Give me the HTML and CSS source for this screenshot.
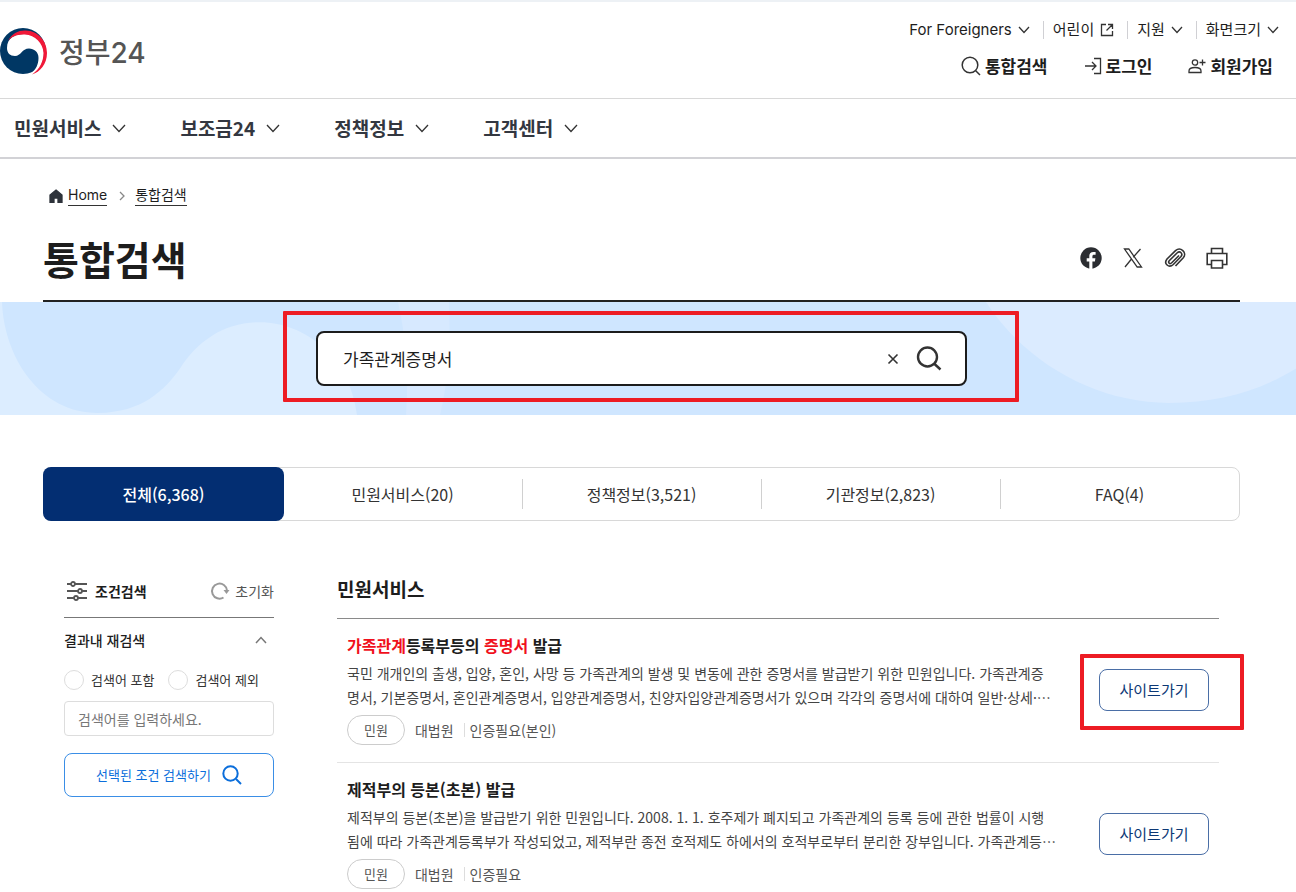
FILE: index.html
```html
<!DOCTYPE html>
<html lang="ko">
<head>
<meta charset="utf-8">
<meta name="viewport" content="width=device-width, initial-scale=1">
<title>통합검색 | 정부24</title>
<link rel="stylesheet" href="styles.css">
</head>
<body>
<header class="header">
  <a class="logo" href="#">
    <svg class="logo-mark" viewBox="0 0 48 48" aria-hidden="true">
      <circle cx="23" cy="24" r="23" fill="#003764"/>
      <path d="M7 21C7 11 15 7 24 7C36 7 44 15 44 26C44 36 39 43 33 48L31 46C36 43 38.500 37 38.500 31C38.500 25 34 21.500 29 21.500C22 21.500 21 29 15 29C10 29 7 26 7 21Z" fill="#fff"/>
      <path d="M8 14C12 6 19 3 26 3.500C38 4 47 14 47 26C47 37 40 45 32 47.500C40 42 43.500 34 43.500 26C43 16 35 8 25 7.500C17 7 11 10 8 14Z" fill="#f01838"/>
    </svg>
    <span>정부24</span>
  </a>
  <div class="header-menus">
    <nav class="util" aria-label="부가 메뉴">
      <button type="button">For Foreigners <svg class="chev" viewBox="0 0 12 8"><path d="M1 1l5 5.500L11 1"/></svg></button>
      <a href="#">어린이 <svg class="ext" viewBox="0 0 14 14"><path d="M6 1.500H1.500v11h11V8M8 1.500h4.500V6M12.500 1.500L6.500 7.500"/></svg></a>
      <button type="button">지원 <svg class="chev" viewBox="0 0 12 8"><path d="M1 1l5 5.500L11 1"/></svg></button>
      <button type="button">화면크기 <svg class="chev" viewBox="0 0 12 8"><path d="M1 1l5 5.500L11 1"/></svg></button>
    </nav>
    <nav class="account" aria-label="회원 메뉴">
      <a href="#"><svg class="i20" viewBox="0 0 20 20"><circle cx="9" cy="9" r="7.800"/><path d="M14.500 14.500l4.500 4.500"/></svg>통합검색</a>
      <a href="#"><svg class="i18" viewBox="0 0 18 18"><path d="M1 9h11M8 5l4 4-4 4M10 1.500h6.500v15H10"/></svg>로그인</a>
      <a href="#"><svg class="i18" viewBox="0 0 18 18"><circle cx="7" cy="5.500" r="2.700"/><path d="M1 15.500v-1.500c0-2.500 2-3.500 6-3.500s6 1 6 3.500v1.500zM11.500 5.500h6M14.500 2.500v6"/></svg>회원가입</a>
    </nav>
  </div>
</header>

<nav class="gnb" aria-label="주 메뉴">
  <button type="button">민원서비스 <svg viewBox="0 0 14 9"><path d="M1 1l6 6.500L13 1"/></svg></button>
  <button type="button">보조금24 <svg viewBox="0 0 14 9"><path d="M1 1l6 6.500L13 1"/></svg></button>
  <button type="button">정책정보 <svg viewBox="0 0 14 9"><path d="M1 1l6 6.500L13 1"/></svg></button>
  <button type="button">고객센터 <svg viewBox="0 0 14 9"><path d="M1 1l6 6.500L13 1"/></svg></button>
</nav>

<main>
  <div class="wrap">
    <nav class="crumbs" aria-label="현재 위치">
      <svg class="home" viewBox="0 0 14 14"><path d="M7 1l6 5v7.500H9V9H5v4.500H1V6z"/></svg>
      <a href="#">Home</a>
      <svg class="sep" viewBox="0 0 6 10"><path d="M1 1l4 4-4 4"/></svg>
      <a href="#">통합검색</a>
    </nav>
    <div class="title-row">
      <h1>통합검색</h1>
      <div class="share">
        <button type="button" aria-label="페이스북"><svg viewBox="0 0 22 22"><circle cx="11" cy="11" r="10.700" fill="#2b2d31"/><path d="M9.300 22v-7.500H6.700v-3.200h2.600V9c0-2.700 1.600-4.100 4-4.100.9 0 1.800.1 2.300.2v2.700h-1.500c-1.300 0-1.700.8-1.700 1.700v1.800h3l-.5 3.200h-2.500V22z" fill="#fff"/></svg></button>
        <button type="button" aria-label="X"><svg class="line" viewBox="0 0 22 22"><path d="M2.500 2h4.300l12.700 18h-4.300zM18.500 2l-7.300 8.200M9.500 12L3 20" /></svg></button>
        <button type="button" aria-label="링크 복사"><svg class="line clip" viewBox="0 0 22 22"><path d="M15 8.500l-7.500 7.500c-1.800 1.500-3.800-.5-2.300-2.200L13 6c3-2.700 6.500.7 3.800 3.800l-7.500 7.700c-4.500 4-10-.8-6.300-5.500l8.500-8.300c5-4.500 12 2 7.800 7L11.500 19"/></svg></button>
        <button type="button" aria-label="인쇄"><svg class="line print" viewBox="0 0 22 22"><path d="M5.500 6.500V1.500h11v5M5.500 17.500H1.200v-11h19.600v11h-4.300M5.500 13.500h11v7.500h-11z"/></svg></button>
      </div>
    </div>
  </div>

  <section class="banner">
    <svg class="waves" viewBox="0 0 1296 112" preserveAspectRatio="none" aria-hidden="true">
      <path fill="#dcedff" d="M0 0H2C4 55 40 110 98 110C142 110 165 87 180 66C198 38 225 20 260 20C305 20 350 55 357 112H0Z"/>
      <path fill="#d7e9ff" d="M398 0H449C451 40 448 80 440 112H406C409 75 406 35 398 0Z"/>
      <path fill="#dbebff" d="M986 0C1025 60 1095 100 1169 100C1218 100 1260 88 1296 66V0Z"/>
    </svg>
    <form class="search marked">
      <input type="text" aria-label="검색어" value="가족관계증명서">
      <button type="reset" aria-label="지우기"><svg class="x" viewBox="0 0 12 12"><path d="M1.500 1.500l9 9M10.500 1.500l-9 9"/></svg></button>
      <button type="submit" aria-label="검색"><svg class="glass" viewBox="0 0 26 26"><circle cx="11.500" cy="11" r="9.500"/><path d="M18 17.500l6.500 6"/></svg></button>
    </form>
  </section>

  <div class="wrap">
    <nav class="tabs" aria-label="검색 분류">
      <a class="on" href="#">전체(6,368)</a>
      <a href="#">민원서비스(20)</a>
      <a href="#">정책정보(3,521)</a>
      <a href="#">기관정보(2,823)</a>
      <a href="#">FAQ(4)</a>
    </nav>
    <div class="columns">
      <aside>
        <div class="filter-head">
          <svg class="sliders" viewBox="0 0 20 20"><path d="M0 3h4M8 3h12M0 10h11M15 10h5M0 17h7M11 17h9"/><circle cx="6" cy="3" r="2"/><circle cx="13" cy="10" r="2"/><circle cx="9" cy="17" r="2"/></svg>
          <h2>조건검색</h2>
          <button type="reset" form="refine"><svg class="reset" viewBox="0 0 18 18"><path d="M12.500 15.500A7.500 7.500 0 1 1 16 8.500"/><path class="tip" d="M12.500 8h6l-3 4z"/></svg>초기화</button>
        </div>
        <form id="refine">
          <button class="fold" type="button">결과내 재검색 <svg viewBox="0 0 12 8"><path d="M1 7l5-5.500L11 7"/></svg></button>
          <div class="radios">
            <label><input type="radio" name="mode">검색어 포함</label>
            <label><input type="radio" name="mode">검색어 제외</label>
          </div>
          <input class="term" type="text" aria-label="재검색어" placeholder="검색어를 입력하세요.">
          <button class="apply" type="submit">선택된 조건 검색하기 <svg viewBox="0 0 20 20"><circle cx="8.500" cy="8.500" r="7.200"/><path d="M14 14l5 5"/></svg></button>
        </form>
      </aside>
      <section class="results">
        <h2>민원서비스</h2>
        <article>
          <div class="body">
            <h3><a href="#"><mark>가족관계</mark>등록부등의 <mark>증명서</mark> 발급</a></h3>
            <p>국민 개개인의 출생, 입양, 혼인, 사망 등 가족관계의 발생 및 변동에 관한 증명서를 발급받기 위한 민원입니다. 가족관계증<br>명서, 기본증명서, 혼인관계증명서, 입양관계증명서, 친양자입양관계증명서가 있으며 각각의 증명서에 대하여 일반·상세·…</p>
            <div class="meta"><span class="badge">민원</span><span>대법원</span><span>인증필요(본인)</span></div>
          </div>
          <div class="go-box marked"><a class="go" href="#">사이트가기</a></div>
        </article>
        <article>
          <div class="body">
            <h3><a href="#">제적부의 등본(초본) 발급</a></h3>
            <p>제적부의 등본(초본)을 발급받기 위한 민원입니다. 2008. 1. 1. 호주제가 폐지되고 가족관계의 등록 등에 관한 법률이 시행<br>됨에 따라 가족관계등록부가 작성되었고, 제적부란 종전 호적제도 하에서의 호적부로부터 분리한 장부입니다. 가족관계등…</p>
            <div class="meta"><span class="badge">민원</span><span>대법원</span><span>인증필요</span></div>
          </div>
          <div class="go-box"><a class="go" href="#">사이트가기</a></div>
        </article>
      </section>
    </div>
  </div>
</main>
</body>
</html>
```
FILE: styles.css
```css
* { box-sizing: border-box; }

body {
  margin: 0;
  border-top: 2px solid #edf1f5;
  background: #fff;
  color: #1d1d1d;
  font-family: "Noto Sans CJK KR", sans-serif;
  font-size: 14px;
  line-height: 20px;
}

h1, h2, h3, p { margin: 0; }
a { color: inherit; text-decoration: none; }
svg { display: block; flex: none; fill: none; stroke: #333; stroke-width: 1.3; }
button { padding: 0; border: 0; background: none; color: inherit; font: inherit; cursor: pointer; }
input { font: inherit; color: inherit; }

.header {
  display: flex;
  justify-content: space-between;
  height: 97px;
  padding: 17px 17px 0 0;
  border-bottom: 1px solid #d8d8d8;
}
.logo {
  display: flex;
  align-items: center;
  gap: 11px;
  height: 64px;
  color: #555;
  font-family: Inter, "Noto Sans CJK KR", sans-serif;
  font-size: 28px;
  line-height: 40px;
}
.logo span { padding-top: 4px; font-weight: 500; }
.logo-mark { width: 48px; height: 48px; stroke: none; overflow: hidden; }
.header-menus { display: flex; flex-direction: column; gap: 13px; }
.util, .util > *, .account, .account a { display: flex; align-items: center; }
.util { justify-content: flex-end; height: 22px; font-family: Inter, "Noto Sans CJK KR", sans-serif; font-size: 15px; }
.util > * { gap: 6px; }
.util > * + * { margin-left: 13px; padding-left: 9px; border-left: 1px solid #d0d0d4; height: 18px; }
.chev { width: 12px; height: 8px; }
.ext { width: 14px; height: 14px; }
.account { justify-content: flex-end; gap: 36px; height: 24px; padding-right: 6px; font-size: 17px; font-weight: 700; }
.account a { gap: 4px; }
.i20 { width: 20px; height: 20px; stroke-width: 1.5; }
.i18 { width: 18px; height: 18px; }

.gnb {
  display: flex;
  gap: 54px;
  height: 60px;
  padding-left: 14px;
  border-bottom: 2px solid #d2d2d6;
  color: #333740;
  font-size: 19px;
  font-weight: 700;
}
.gnb button { display: flex; align-items: center; gap: 11px; }
.gnb svg { width: 14px; height: 9px; }

.wrap { padding: 0 56px 0 43px; }
.crumbs { display: flex; align-items: center; padding: 26px 0 0 6px; }
.crumbs a { border-bottom: 1px solid #333; font-family: Inter, "Noto Sans CJK KR", sans-serif; }
.home { width: 14px; height: 14px; margin-right: 5px; fill: #2e333b; stroke: #2e333b; }
.sep { width: 6px; height: 10px; margin: 0 10px 0 12px; stroke: #888; }
.title-row {
  display: flex;
  justify-content: space-between;
  align-items: center;
  height: 96px;
  padding: 10px 12px 0 0;
  border-bottom: 2px solid #222;
}
h1 { font-size: 39px; line-height: 56px; font-weight: 700; }
.share { display: flex; gap: 20px; }
.share button, .share svg { width: 22px; height: 22px; }
.share svg { stroke: none; }
.share .line { stroke: #333; stroke-width: 1.3; }
.share .clip, .share .print { stroke-width: 1.6; }

.banner { position: relative; display: flex; justify-content: center; height: 113px; padding: 29px 13px 0 0; background: #cfe6ff; }
.waves { position: absolute; inset: 0; width: 100%; height: 100%; stroke: none; }
.search {
  position: relative;
  display: flex;
  align-items: center;
  flex: 0 1 651px;
  height: 55px;
  padding: 0 23px 0 25px;
  border: 2px solid #1c1c1c;
  border-radius: 8px;
  background: #fff;
}
.search input { flex: 1; min-width: 0; padding: 0; border: 0; outline: 0; background: none; font-size: 17px; }
.x { width: 12px; height: 12px; margin-right: 17px; stroke-width: 1.6; }
.glass { width: 26px; height: 26px; stroke-width: 2.4; }
.marked::after { content: ""; position: absolute; border: 4px solid #ed1c24; border-radius: 1px; pointer-events: none; }
.search.marked::after { inset: -22px -54px -18px -35px; }

.tabs {
  display: grid;
  grid-template-columns: repeat(5, 1fr);
  height: 54px;
  margin-top: 52px;
  border: 1px solid #d8d8d8;
  border-radius: 8px;
  color: #333;
  font-size: 16px;
}
.tabs a { display: flex; align-items: center; justify-content: center; }
.tabs a + a + a { background: linear-gradient(#d0d0d0, #d0d0d0) left center / 1px 30px no-repeat; }
.tabs .on { margin: -1px; border-radius: 8px; background: #032e72; color: #fff; font-weight: 500; }

.columns { display: grid; grid-template-columns: 210px minmax(0, 1fr); gap: 63px; padding: 52px 21px 0; }
.filter-head { display: flex; align-items: center; height: 45px; padding: 0 0 9px 3px; border-bottom: 1px solid #777; }
.filter-head h2 { flex: 1; margin-left: 8px; font-size: 14px; font-weight: 700; }
.filter-head button { display: flex; align-items: center; gap: 6px; color: #555; }
.sliders { width: 20px; height: 20px; stroke: #555; stroke-width: 1.8; }
.reset { width: 18px; height: 18px; stroke: #999; stroke-width: 2; overflow: visible; }
.reset .tip { fill: #999; stroke: none; }
.fold { display: flex; align-items: center; justify-content: space-between; width: 100%; height: 44px; padding-right: 7px; font-weight: 500; }
.fold svg { width: 12px; height: 8px; stroke: #777; stroke-width: 1.5; }
.radios { display: flex; gap: 14px; height: 36px; font-size: 13px; color: #333; }
.radios label { display: flex; align-items: center; gap: 7px; }
.radios input { appearance: none; width: 20px; height: 20px; margin: 0; border: 1px solid #ddd; border-radius: 50%; }
.radios input:checked { border: 6px solid #0b6edb; }
.term { display: block; width: 100%; height: 35px; margin-top: 3px; padding: 0 13px; border: 1px solid #ddd; border-radius: 4px; }
.term::placeholder { color: #777; opacity: 1; }
.apply {
  display: flex;
  align-items: center;
  justify-content: center;
  gap: 11px;
  width: 100%;
  height: 44px;
  margin-top: 17px;
  border: 1px solid #3a8ee6;
  border-radius: 8px;
  color: #0b6edb;
  font-size: 13px;
}
.apply svg { width: 20px; height: 20px; stroke: #0b6edb; stroke-width: 2; }

.results > h2 { height: 46px; padding-top: 2px; border-bottom: 1px solid #8a8a8a; font-size: 19px; line-height: 28px; font-weight: 700; }
article { display: flex; justify-content: space-between; padding: 14px 10px 17px; border-bottom: 1px solid #e4e4e4; }
.body { min-width: 0; }
h3 { font-size: 16px; line-height: 24px; font-weight: 700; }
mark { background: none; color: #f0101c; }
.body p { margin-top: 4px; color: #444; font-size: 14px; line-height: 24px; white-space: nowrap; }
.meta { display: flex; align-items: center; margin-top: 6px; color: #555; }
.badge { margin-right: 10px; padding: 4px 16px; border: 1px solid #ccc; border-radius: 15px; font-size: 13px; }
.badge + span + span { margin-left: 10px; padding-left: 6px; background: linear-gradient(#ddd, #ddd) left center / 1px 14px no-repeat; }
.go-box { position: relative; flex: none; align-self: flex-start; margin-top: 36px; }
.go { display: block; width: 110px; padding: 10px 0; border: 1px solid #4a6ea6; border-radius: 8px; color: #0c3875; font-size: 15px; line-height: 20px; text-align: center; }
.go-box.marked::after { inset: -15px -35px -19px -19px; }
```
